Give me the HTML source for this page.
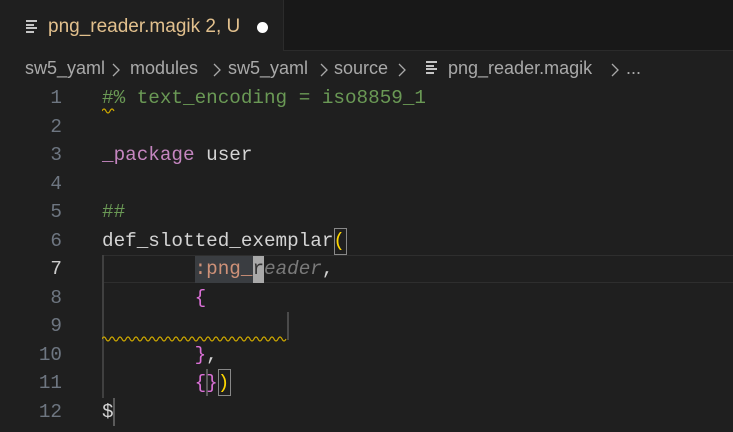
<!DOCTYPE html>
<html><head><meta charset="utf-8"><style>
body{margin:0;width:733px;height:432px;background:#1f1f1f;overflow:hidden;position:relative;font-family:"Liberation Sans",sans-serif}
.tabbar{position:absolute;left:0;top:0;width:733px;height:50px;background:#181818;border-bottom:1px solid #2b2b2b}
.tab{position:absolute;left:0;top:0;width:283px;height:51px;background:#1f1f1f;border-right:1px solid #2b2b2b}
.tab .t{position:absolute;left:48px;top:16px;font-size:19px;color:#e2c08d;white-space:pre}
.dot{position:absolute;left:257px;top:22px;width:11px;height:11px;border-radius:50%;background:#fff}
.ic{position:absolute;width:11px}
.ic i{display:block;height:2px;background:#c5c5c5;margin-bottom:1.5px}
.b{position:absolute;top:58px;font-size:18px;color:#a9a9a9;white-space:pre}
.ch{position:absolute;top:61px}
.code{position:absolute;left:0;top:84px;font-family:"Liberation Mono",monospace;font-size:19.3px}
.ln{position:absolute;height:28.5px;line-height:28.5px;white-space:pre}
.n{position:absolute;width:62px;text-align:right;color:#6e7681;font-family:"Liberation Mono",monospace;font-size:19.3px;line-height:28.5px}
.c{color:#6a9955}.k{color:#c586c0}.d{color:#d4d4d4}.y{color:#ffd700}.p{color:#da70d6}.s{color:#ce9178}.g{color:#7a7a7a;font-style:italic}
</style></head><body>
<div class="tabbar"></div>
<div class="tab"><div class="ic" style="left:26px;top:20px"><i></i><i style="width:8px"></i><i></i><i style="width:8px"></i></div><div class="t">png_reader.magik 2, U</div></div>
<div class="dot"></div>

<span class="b" style="left:25px">sw5_yaml</span>
<span class="b" style="left:130px">modules</span>
<span class="b" style="left:228px">sw5_yaml</span>
<span class="b" style="left:334px">source</span>
<svg class="ch" style="left:110px" width="12" height="18"><path d="M3 3 L9 9 L3 15" stroke="#a9a9a9" fill="none" stroke-width="1.3"/></svg>
<svg class="ch" style="left:211px" width="12" height="18"><path d="M3 3 L9 9 L3 15" stroke="#a9a9a9" fill="none" stroke-width="1.3"/></svg>
<svg class="ch" style="left:318px" width="12" height="18"><path d="M3 3 L9 9 L3 15" stroke="#a9a9a9" fill="none" stroke-width="1.3"/></svg>
<svg class="ch" style="left:396px" width="12" height="18"><path d="M3 3 L9 9 L3 15" stroke="#a9a9a9" fill="none" stroke-width="1.3"/></svg>
<div class="ic" style="left:426px;top:61px"><i></i><i style="width:8px"></i><i></i><i style="width:8px"></i></div>
<span class="b" style="left:448px">png_reader.magik</span>
<svg class="ch" style="left:609px" width="12" height="18"><path d="M3 3 L9 9 L3 15" stroke="#a9a9a9" fill="none" stroke-width="1.3"/></svg>
<span class="b" style="left:626px">...</span>

<div style="position:absolute;left:102px;top:255px;width:640px;height:26px;border-top:1px solid #2e2e2e;border-bottom:1px solid #2e2e2e"></div>
<div style="position:absolute;left:195px;top:256px;width:58px;height:27px;background:#3a3d41"></div>
<div style="position:absolute;left:253px;top:256px;width:11px;height:27px;background:#a9a9a9"></div>
<div style="position:absolute;left:102px;top:255px;width:2px;height:143px;background:#404040"></div>
<div style="position:absolute;left:113px;top:398px;width:2px;height:28px;background:#5a5a5a"></div>
<div style="position:absolute;left:287px;top:312px;width:2px;height:28px;background:#4a4a4a"></div>
<div style="position:absolute;left:206px;top:369px;width:2px;height:27px;background:#5a5a5a"></div>
<div style="position:absolute;left:334px;top:228px;width:11px;height:25px;border:1px solid #888"></div>
<div style="position:absolute;left:218px;top:369px;width:11px;height:25px;border:1px solid #888"></div>
<svg style="position:absolute;left:102px;top:334px" width="186" height="8"><path d="M0 5 q2 -4 4 0 t4 0 t4 0 t4 0 t4 0 t4 0 t4 0 t4 0 t4 0 t4 0 t4 0 t4 0 t4 0 t4 0 t4 0 t4 0 t4 0 t4 0 t4 0 t4 0 t4 0 t4 0 t4 0 t4 0 t4 0 t4 0 t4 0 t4 0 t4 0 t4 0 t4 0 t4 0 t4 0 t4 0 t4 0 t4 0 t4 0 t4 0 t4 0 t4 0 t4 0 t4 0 t4 0 t4 0 t4 0 t4 0" stroke="#cca700" fill="none" stroke-width="1.2"/></svg>
<svg style="position:absolute;left:102px;top:106px" width="14" height="8"><path d="M0 5 q2 -4 4 0 t4 0 t4 0" stroke="#cca700" fill="none" stroke-width="1.2"/></svg>

<div class="code">
<div class="n" style="top:0">1</div><div class="ln" style="left:102px;top:0"><span class="c">#% text_encoding = iso8859_1</span></div>
<div class="n" style="top:28.5px">2</div>
<div class="n" style="top:57px">3</div><div class="ln" style="left:102px;top:57px"><span class="k">_package</span> <span class="d">user</span></div>
<div class="n" style="top:85.5px">4</div>
<div class="n" style="top:114px">5</div><div class="ln" style="left:102px;top:114px"><span class="c">##</span></div>
<div class="n" style="top:142.5px">6</div><div class="ln" style="left:102px;top:142.5px"><span class="d">def_slotted_exemplar</span><span class="y">(</span></div>
<div class="n" style="top:171px;color:#cccccc">7</div><div class="ln" style="left:102px;top:171px">        <span class="s">:png_</span><span style="color:#333">r</span><span class="g">eader</span><span class="d">,</span></div>
<div class="n" style="top:199.5px">8</div><div class="ln" style="left:102px;top:199.5px">        <span class="p">{</span></div>
<div class="n" style="top:228px">9</div>
<div class="n" style="top:256.5px">10</div><div class="ln" style="left:102px;top:256.5px">        <span class="p">}</span><span class="d">,</span></div>
<div class="n" style="top:285px">11</div><div class="ln" style="left:102px;top:285px">        <span class="p">{}</span><span class="y">)</span></div>
<div class="n" style="top:313.5px">12</div><div class="ln" style="left:102px;top:313.5px"><span class="d">$</span></div>
</div>
</body></html>
